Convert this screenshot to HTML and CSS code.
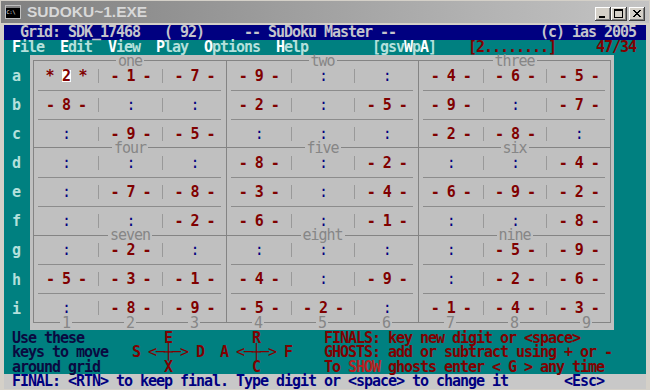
FILE: index.html
```html
<!DOCTYPE html>
<html>
<head>
<meta charset="utf-8">
<title>SUDOKU~1.EXE</title>
<link rel="stylesheet" href="styles.css">
</head>
<body>
<div class="window">
  <div class="titlebar">
    <svg class="appicon" width="16" height="16" viewBox="0 0 16 16">
      <rect x="0.5" y="1.5" width="15" height="13" fill="#000" stroke="#c0c0c0"/>
      <rect x="1" y="2" width="14" height="2" fill="#808080"/>
      <text x="1.5" y="9.5" font-size="5" fill="#fff" font-family="DejaVu Sans Mono">C:\</text>
    </svg>
    <span class="title">SUDOKU~1.EXE</span>
    <div class="capbtns">
      <span class="cbtn"><svg width="16" height="14" viewBox="0 0 16 14"><rect x="4" y="9" width="6" height="2" fill="#000"/></svg></span>
      <span class="cbtn"><svg width="16" height="14" viewBox="0 0 16 14"><rect x="3.5" y="2.5" width="8" height="8" fill="none" stroke="#000"/><rect x="3" y="2" width="9" height="2" fill="#000"/></svg></span>
      <span class="cbtn close"><svg width="16" height="14" viewBox="0 0 16 14"><path d="M4 3 L11 10 M5 3 L12 10 M11 3 L4 10 M12 3 L5 10" stroke="#000" stroke-width="1"/></svg></span>
    </div>
  </div>
  <div class="console">
    <div class="line hdr">  Grid: SDK_17468   ( 92)     -- SuDoku Master --                  (c) ias 2005 </div>
    <div class="line menu"> <span class="k">F</span>ile  <span class="k">E</span>dit  <span class="k">V</span>iew  <span class="k">P</span>lay  <span class="k">O</span>ptions  <span class="k">H</span>elp        [gsv<span class="k">W</span>p<span class="k">A</span>]    <span class="r">[2........]</span>     <span class="r">47/34</span></div>
    <div class="middle">
      <div class="rowlabels">
a

b

c

d

e

f

g

h

i
</div>
      <div class="panel">
        <div class="board">
          <div class="box">
            <div class="blabel"><span>one</span></div>
            <div class="cells"><div class="c n">* <span class="hl">2</span> *</div><div class="c n">- 1 -</div><div class="c n">- 7 -</div></div>
            <div class="sep"></div>
            <div class="cells"><div class="c n">- 8 -</div><div class="c e">:</div><div class="c e">:</div></div>
            <div class="sep"></div>
            <div class="cells"><div class="c e">:</div><div class="c n">- 9 -</div><div class="c n">- 5 -</div></div>
          </div>
          <div class="box">
            <div class="blabel"><span>two</span></div>
            <div class="cells"><div class="c n">- 9 -</div><div class="c e">:</div><div class="c e">:</div></div>
            <div class="sep"></div>
            <div class="cells"><div class="c n">- 2 -</div><div class="c e">:</div><div class="c n">- 5 -</div></div>
            <div class="sep"></div>
            <div class="cells"><div class="c e">:</div><div class="c e">:</div><div class="c e">:</div></div>
          </div>
          <div class="box">
            <div class="blabel"><span>three</span></div>
            <div class="cells"><div class="c n">- 4 -</div><div class="c n">- 6 -</div><div class="c n">- 5 -</div></div>
            <div class="sep"></div>
            <div class="cells"><div class="c n">- 9 -</div><div class="c e">:</div><div class="c n">- 7 -</div></div>
            <div class="sep"></div>
            <div class="cells"><div class="c n">- 2 -</div><div class="c n">- 8 -</div><div class="c e">:</div></div>
          </div>
          <div class="box">
            <div class="blabel"><span>four</span></div>
            <div class="cells"><div class="c e">:</div><div class="c e">:</div><div class="c e">:</div></div>
            <div class="sep"></div>
            <div class="cells"><div class="c e">:</div><div class="c n">- 7 -</div><div class="c n">- 8 -</div></div>
            <div class="sep"></div>
            <div class="cells"><div class="c e">:</div><div class="c e">:</div><div class="c n">- 2 -</div></div>
          </div>
          <div class="box">
            <div class="blabel"><span>five</span></div>
            <div class="cells"><div class="c n">- 8 -</div><div class="c e">:</div><div class="c n">- 2 -</div></div>
            <div class="sep"></div>
            <div class="cells"><div class="c n">- 3 -</div><div class="c e">:</div><div class="c n">- 4 -</div></div>
            <div class="sep"></div>
            <div class="cells"><div class="c n">- 6 -</div><div class="c e">:</div><div class="c n">- 1 -</div></div>
          </div>
          <div class="box">
            <div class="blabel"><span>six</span></div>
            <div class="cells"><div class="c e">:</div><div class="c e">:</div><div class="c n">- 4 -</div></div>
            <div class="sep"></div>
            <div class="cells"><div class="c n">- 6 -</div><div class="c n">- 9 -</div><div class="c n">- 2 -</div></div>
            <div class="sep"></div>
            <div class="cells"><div class="c e">:</div><div class="c e">:</div><div class="c n">- 8 -</div></div>
          </div>
          <div class="box">
            <div class="blabel"><span>seven</span></div>
            <div class="cells"><div class="c e">:</div><div class="c n">- 2 -</div><div class="c e">:</div></div>
            <div class="sep"></div>
            <div class="cells"><div class="c n">- 5 -</div><div class="c n">- 3 -</div><div class="c n">- 1 -</div></div>
            <div class="sep"></div>
            <div class="cells"><div class="c e">:</div><div class="c n">- 8 -</div><div class="c n">- 9 -</div></div>
          </div>
          <div class="box">
            <div class="blabel"><span>eight</span></div>
            <div class="cells"><div class="c e">:</div><div class="c e">:</div><div class="c e">:</div></div>
            <div class="sep"></div>
            <div class="cells"><div class="c n">- 4 -</div><div class="c e">:</div><div class="c n">- 9 -</div></div>
            <div class="sep"></div>
            <div class="cells"><div class="c n">- 5 -</div><div class="c n">- 2 -</div><div class="c e">:</div></div>
          </div>
          <div class="box">
            <div class="blabel"><span>nine</span></div>
            <div class="cells"><div class="c e">:</div><div class="c n">- 5 -</div><div class="c n">- 9 -</div></div>
            <div class="sep"></div>
            <div class="cells"><div class="c e">:</div><div class="c n">- 2 -</div><div class="c n">- 6 -</div></div>
            <div class="sep"></div>
            <div class="cells"><div class="c n">- 1 -</div><div class="c n">- 4 -</div><div class="c n">- 3 -</div></div>
          </div>
        </div>
        <div class="colnums">
          <div><span>1</span></div><div><span>2</span></div><div><span>3</span></div>
          <div><span>4</span></div><div><span>5</span></div><div><span>6</span></div>
          <div><span>7</span></div><div><span>8</span></div><div class="last"><span>9</span></div>
        </div>
      </div>
    </div>
    <div class="line"><span class="ink"> Use these</span>          <span class="r">E</span>          <span class="r">R</span>        <span class="r">FINALS: key new digit or &lt;space&gt;</span></div>
    <div class="line"><span class="ink"> keys to move</span>   <span class="r">S <span class="arr">&lt;─┼─&gt;</span> D  A <span class="arr">&lt;─┼─&gt;</span> F</span>    <span class="r">GHOSTS: add or subtract using + or -</span></div>
    <div class="line"><span class="ink"> around grid</span>        <span class="r">X</span>          <span class="r">C</span>        <span class="r">To <span class="hot">SHOW</span> ghosts enter &lt; G &gt; any time</span></div>
    <div class="line status"> FINAL: &lt;RTN&gt; to keep final. Type digit or &lt;space&gt; to change it       &lt;Esc&gt;</div>
  </div>
</div>
</body>
</html>
```

FILE: styles.css
```css
* { box-sizing: border-box; }

body {
  margin: 0;
  background: #d4d0c8;
}

.window {
  width: 650px;
  height: 390px;
  background: #d4d0c8;
  padding: 1px 4px 1px 4px;
}

/* ---------- title bar ---------- */
.titlebar {
  height: 22px;
  margin: 0 -3px;
  display: flex;
  align-items: center;
  padding-left: 4px;
  padding-right: 4px;
  background: linear-gradient(to right, #808080, #c4c4c4);
}

.appicon { flex: none; }

.title {
  margin-left: 6px;
  font: bold 15.5px "Liberation Sans", Arial, sans-serif;
  color: #d8d8d8;
}

.capbtns {
  margin-left: auto;
  display: flex;
  align-self: flex-end;
  margin-bottom: 2px;
}

.cbtn {
  width: 16px;
  height: 14px;
  background: #d4d0c8;
  box-shadow: inset -1px -1px #404040, inset 1px 1px #ffffff, inset -2px -2px #808080;
  display: block;
}
.cbtn svg { display: block; }
.cbtn.close { margin-left: 2px; }

/* ---------- console ---------- */
.console {
  margin-top: 2px;
  height: 364px;
  width: 642px;
  background: #008080;
  font-family: "DejaVu Sans Mono", "Liberation Mono", monospace;
  font-weight: bold;
  font-size: 15px;
  letter-spacing: -1.031px;
  line-height: 14.56px;
  color: #c0c0c0;
}

.line {
  height: 14.56px;
  white-space: pre;
}

.hdr {
  background: #000080;
  color: #c4c4cc;
}

.menu { color: #b4e0dc; }
.menu .k { color: #ffffff; }

.r { color: #800000; }
.ink { color: #0a0a40; }
.hot { color: #b82020; }
.arr { font-weight: normal; }

.status {
  background: #c8c8c8;
  color: #000080;
}

/* ---------- middle: labels + panel ---------- */
.middle {
  display: flex;
  height: 276.64px;
}

.rowlabels {
  width: 26px;
  padding-left: 8px;
  white-space: pre;
  color: #b4e0dc;
}

.panel {
  width: 584px;
  height: 274.6px;
  margin-top: 1px;
  padding: 5px 3px 0 3px;
  background: #c0c0c0;
}

.board {
  display: grid;
  grid-template-columns: 193px 192px 192px;
  border-right: 1px solid #848484;
  border-bottom: 1px solid #848484;
}

.box {
  border-top: 1px solid #848484;
  border-left: 1px solid #848484;
  padding-bottom: 6.28px;
}

.blabel {
  height: 14.56px;
  margin-top: -7.28px;
  text-align: center;
  font-weight: normal;
  color: #868686;
}

/* the label masks the box line only in a thin strip at mid-height */
.blabel span,
.colnums span {
  padding: 0 2px;
  background: linear-gradient(#c0c0c0, #c0c0c0) center / 100% 4px no-repeat;
}

.cells {
  display: grid;
  grid-template-columns: repeat(3, 1fr);
  height: 14.56px;
  align-items: center;
}

.c {
  height: 14px;
  line-height: 14px;
  text-align: center;
  white-space: pre;
}
.c + .c { border-left: 1px solid #999999; }

.n { color: #800000; }
.e { color: #000080; font-weight: normal; }

.hl {
  display: inline-block;
  width: 9px;
  height: 12px;
  line-height: 12px;
  background: #ffffff;
}

.sep {
  height: 14.56px;
  display: flex;
  align-items: center;
  padding: 0 5px 0 4px;
}
.sep::before {
  content: "";
  flex: 1;
  height: 1px;
  background: #8c8c8c;
}

.colnums {
  display: grid;
  grid-template-columns: repeat(9, 64px);
  padding-left: 1px;
  height: 14.56px;
  margin-top: -7.28px;
  font-weight: normal;
  color: #868686;
  text-align: center;
}
.colnums .last { padding-left: 16px; }
```
